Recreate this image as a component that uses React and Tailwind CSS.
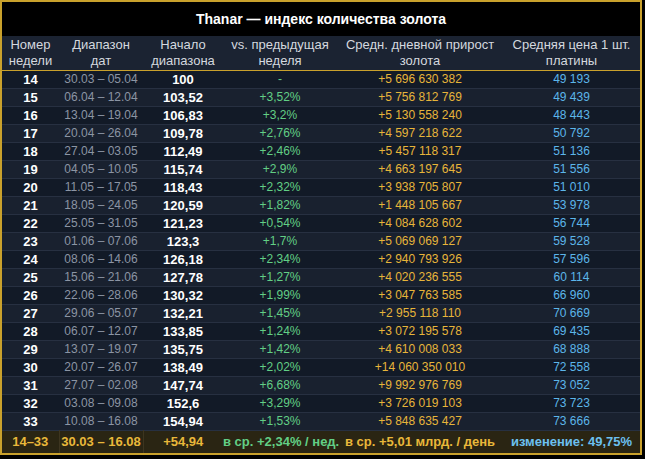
import React from 'react';

const rows = [
    ['14', '30.03 – 05.04', '100', '-', '+5 696 630 382', '49 193'],
    ['15', '06.04 – 12.04', '103,52', '+3,52%', '+5 756 812 769', '49 439'],
    ['16', '13.04 – 19.04', '106,83', '+3,2%', '+5 130 558 240', '48 443'],
    ['17', '20.04 – 26.04', '109,78', '+2,76%', '+4 597 218 622', '50 792'],
    ['18', '27.04 – 03.05', '112,49', '+2,46%', '+5 457 118 317', '51 136'],
    ['19', '04.05 – 10.05', '115,74', '+2,9%', '+4 663 197 645', '51 556'],
    ['20', '11.05 – 17.05', '118,43', '+2,32%', '+3 938 705 807', '51 010'],
    ['21', '18.05 – 24.05', '120,59', '+1,82%', '+1 448 105 667', '53 978'],
    ['22', '25.05 – 31.05', '121,23', '+0,54%', '+4 084 628 602', '56 744'],
    ['23', '01.06 – 07.06', '123,3', '+1,7%', '+5 069 069 127', '59 528'],
    ['24', '08.06 – 14.06', '126,18', '+2,34%', '+2 940 793 926', '57 596'],
    ['25', '15.06 – 21.06', '127,78', '+1,27%', '+4 020 236 555', '60 114'],
    ['26', '22.06 – 28.06', '130,32', '+1,99%', '+3 047 763 585', '66 960'],
    ['27', '29.06 – 05.07', '132,21', '+1,45%', '+2 955 118 110', '70 669'],
    ['28', '06.07 – 12.07', '133,85', '+1,24%', '+3 072 195 578', '69 435'],
    ['29', '13.07 – 19.07', '135,75', '+1,42%', '+4 610 008 033', '68 888'],
    ['30', '20.07 – 26.07', '138,49', '+2,02%', '+14 060 350 010', '72 558'],
    ['31', '27.07 – 02.08', '147,74', '+6,68%', '+9 992 976 769', '73 052'],
    ['32', '03.08 – 09.08', '152,6', '+3,29%', '+3 726 019 103', '73 723'],
    ['33', '10.08 – 16.08', '154,94', '+1,53%', '+5 848 635 427', '73 666'],
];

const App = () => {
    return (
        <div className="w-[645px] h-[459px] bg-black" style={{ fontFamily: '"Liberation Sans", Arial, sans-serif' }}>
            <div className="w-[642px] h-[455px] border-2 border-[#c9a12c] bg-black flex flex-col">
                {/* заголовок */}
                <div className="h-[34px] flex items-center justify-center text-white font-bold text-[14px]">
                    Thanar — индекс количества золота
                </div>

                <table className="w-full border-collapse table-fixed text-[13px] text-center">
                    <colgroup>
                        <col className="w-[57px]" />
                        <col className="w-[84px]" />
                        <col className="w-[80px]" />
                        <col className="w-[114px]" />
                        <col className="w-[166px]" />
                        <col />
                    </colgroup>
                    <thead>
                        <tr className="bg-[#1b2332] text-[#d4d8df] leading-[16px] h-[34px] border-b border-[#c9a12c]">
                            <th className="font-normal">Номер<br />недели</th>
                            <th className="font-normal">Диапазон<br />дат</th>
                            <th className="font-normal">Начало<br />диапазона</th>
                            <th className="font-normal">vs. предыдущая<br />неделя</th>
                            <th className="font-normal">Средн. дневной прирост<br />золота</th>
                            <th className="font-normal">Средняя цена 1 шт.<br />платины</th>
                        </tr>
                    </thead>
                    <tbody className="text-[12px]">
                        {rows.map((r, i) => (
                            <tr
                                key={r[0]}
                                className={`h-[18px] leading-[17px] border-b border-[#273041] ${i % 2 === 0 ? 'bg-[#121a27]' : 'bg-[#19212f]'}`}
                            >
                                <td className="text-white font-bold text-[13px]">{r[0]}</td>
                                <td className="text-[#8c95a4]">{r[1]}</td>
                                <td className="text-white font-bold text-[13px]">{r[2]}</td>
                                <td className="text-[#62cf85]">{r[3]}</td>
                                <td className="text-[#e7b53a]">{r[4]}</td>
                                <td className="text-[#5cb6ea]">{r[5]}</td>
                            </tr>
                        ))}
                        {/* итоговая строка */}
                        <tr className="h-[23px] bg-[#2a2513] font-bold text-[13px] border-t border-[#5a4a1c]">
                            <td className="text-[#e9b83a] border-r border-[#3d3520]">14–33</td>
                            <td className="text-[#e9b83a] border-r border-[#3d3520]">30.03 – 16.08</td>
                            <td className="text-[#e9b83a]">+54,94</td>
                            <td className="text-[#62cf85] whitespace-nowrap">в ср. +2,34% / нед.</td>
                            <td className="text-[#e9b83a] whitespace-nowrap">в ср. +5,01 млрд. / день</td>
                            <td className="text-[#6cc0ef] whitespace-nowrap">изменение: 49,75%</td>
                        </tr>
                    </tbody>
                </table>
            </div>
        </div>
    );
};

export default App;
